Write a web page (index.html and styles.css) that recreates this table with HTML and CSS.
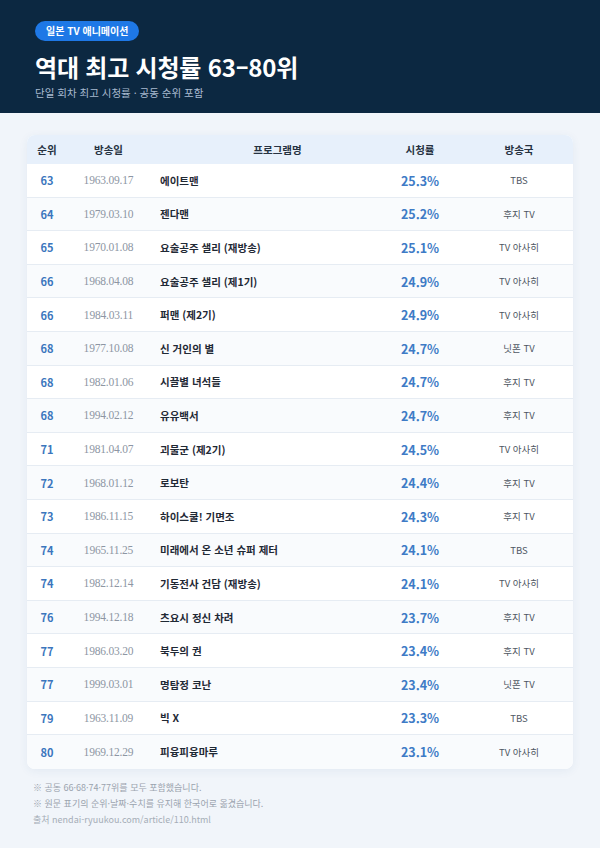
FILE: index.html
```html
<!DOCTYPE html>
<html lang="ko">
<head>
<meta charset="utf-8">
<link rel="stylesheet" href="styles.css">
</head>
<body>
<header class="hero">
  <span class="badge">일본 TV 애니메이션</span>
  <h1 class="title">역대 최고 시청률 63–80위</h1>
  <p class="subtitle">단일 회차 최고 시청률 · 공동 순위 포함</p>
</header>
<main class="content">
  <div class="card">
    <div class="row head">
      <div class="c-rank">순위</div>
      <div class="c-date">방송일</div>
      <div class="c-name">프로그램명</div>
      <div class="c-rate">시청률</div>
      <div class="c-net">방송국</div>
    </div>
    <div class="row"><div class="c-rank">63</div><div class="c-date">1963.09.17</div><div class="c-name">에이트맨</div><div class="c-rate">25.3%</div><div class="c-net">TBS</div></div>
    <div class="row alt"><div class="c-rank">64</div><div class="c-date">1979.03.10</div><div class="c-name">젠다맨</div><div class="c-rate">25.2%</div><div class="c-net">후지 TV</div></div>
    <div class="row"><div class="c-rank">65</div><div class="c-date">1970.01.08</div><div class="c-name">요술공주 샐리 (재방송)</div><div class="c-rate">25.1%</div><div class="c-net">TV 아사히</div></div>
    <div class="row alt"><div class="c-rank">66</div><div class="c-date">1968.04.08</div><div class="c-name">요술공주 샐리 (제1기)</div><div class="c-rate">24.9%</div><div class="c-net">TV 아사히</div></div>
    <div class="row"><div class="c-rank">66</div><div class="c-date">1984.03.11</div><div class="c-name">퍼맨 (제2기)</div><div class="c-rate">24.9%</div><div class="c-net">TV 아사히</div></div>
    <div class="row alt"><div class="c-rank">68</div><div class="c-date">1977.10.08</div><div class="c-name">신 거인의 별</div><div class="c-rate">24.7%</div><div class="c-net">닛폰 TV</div></div>
    <div class="row"><div class="c-rank">68</div><div class="c-date">1982.01.06</div><div class="c-name">시끌별 녀석들</div><div class="c-rate">24.7%</div><div class="c-net">후지 TV</div></div>
    <div class="row alt"><div class="c-rank">68</div><div class="c-date">1994.02.12</div><div class="c-name">유유백서</div><div class="c-rate">24.7%</div><div class="c-net">후지 TV</div></div>
    <div class="row"><div class="c-rank">71</div><div class="c-date">1981.04.07</div><div class="c-name">괴물군 (제2기)</div><div class="c-rate">24.5%</div><div class="c-net">TV 아사히</div></div>
    <div class="row alt"><div class="c-rank">72</div><div class="c-date">1968.01.12</div><div class="c-name">로보탄</div><div class="c-rate">24.4%</div><div class="c-net">후지 TV</div></div>
    <div class="row"><div class="c-rank">73</div><div class="c-date">1986.11.15</div><div class="c-name">하이스쿨! 기면조</div><div class="c-rate">24.3%</div><div class="c-net">후지 TV</div></div>
    <div class="row alt"><div class="c-rank">74</div><div class="c-date">1965.11.25</div><div class="c-name">미래에서 온 소년 슈퍼 제터</div><div class="c-rate">24.1%</div><div class="c-net">TBS</div></div>
    <div class="row"><div class="c-rank">74</div><div class="c-date">1982.12.14</div><div class="c-name">기동전사 건담 (재방송)</div><div class="c-rate">24.1%</div><div class="c-net">TV 아사히</div></div>
    <div class="row alt"><div class="c-rank">76</div><div class="c-date">1994.12.18</div><div class="c-name">츠요시 정신 차려</div><div class="c-rate">23.7%</div><div class="c-net">후지 TV</div></div>
    <div class="row"><div class="c-rank">77</div><div class="c-date">1986.03.20</div><div class="c-name">북두의 권</div><div class="c-rate">23.4%</div><div class="c-net">후지 TV</div></div>
    <div class="row alt"><div class="c-rank">77</div><div class="c-date">1999.03.01</div><div class="c-name">명탐정 코난</div><div class="c-rate">23.4%</div><div class="c-net">닛폰 TV</div></div>
    <div class="row"><div class="c-rank">79</div><div class="c-date">1963.11.09</div><div class="c-name">빅 X</div><div class="c-rate">23.3%</div><div class="c-net">TBS</div></div>
    <div class="row alt last"><div class="c-rank">80</div><div class="c-date">1969.12.29</div><div class="c-name">피융피융마루</div><div class="c-rate">23.1%</div><div class="c-net">TV 아사히</div></div>
  </div>
  <div class="notes">
    <p>※ 공동 66·68·74·77위를 모두 포함했습니다.</p>
    <p>※ 원문 표기의 순위·날짜·수치를 유지해 한국어로 옮겼습니다.</p>
    <p class="src">출처 nendai-ryuukou.com/article/110.html</p>
  </div>
</main>
</body>
</html>
```

FILE: styles.css
```css
* { box-sizing: border-box; }
html, body { margin: 0; padding: 0; }
body {
  width: 600px;
  height: 848px;
  background: #f1f5fa;
  font-family: "Noto Sans CJK KR", "Noto Sans", sans-serif;
  overflow: hidden;
}
.hero {
  background: #0c2841;
  height: 113px;
  padding: 21px 35px 0;
  display: flex;
  flex-direction: column;
  align-items: flex-start;
}
.badge {
  display: inline-block;
  background: #1e78e6;
  color: #fff;
  font-size: 10px;
  font-weight: 700;
  height: 20px;
  line-height: 20px;
  padding: 0 11px;
  border-radius: 10px;
}
.title {
  margin: 9px 0 0;
  color: #fff;
  font-size: 24px;
  font-weight: 700;
  line-height: 34px;
  letter-spacing: -0.2px;
}
.subtitle {
  margin: 1px 0 0;
  color: #a8bad0;
  font-size: 10.5px;
  line-height: 16px;
}
.content {
  padding: 22px 27px 0;
}
.card {
  background: #fff;
  border-radius: 8px;
  box-shadow: 0 2px 10px rgba(40, 80, 140, 0.07);
  overflow: hidden;
}
.row {
  display: grid;
  grid-template-columns: 40px 83px 235px 82px 1fr;
  align-items: center;
  height: 33.6px;
  border-bottom: 1px solid #e6ecf3;
  background: #fff;
}
.row.alt { background: #f9fbfd; }
.row.last { border-bottom: none; }
.row.head {
  height: 29px;
  background: #e7f0fb;
  border-bottom: none;
  font-size: 10.5px;
  font-weight: 700;
  color: #263241;
}
.c-rank { text-align: center; }
.c-date { text-align: center; }
.c-name { padding-left: 10px; }
.c-rate { text-align: center; padding-right: 12px; }
.c-net { text-align: center; padding-right: 2px; }
.head .c-name { text-align: center; padding-left: 20px; }
.row:not(.head) .c-rank {
  color: #3b76bd;
  font-size: 11px;
  font-weight: 700;
}
.row:not(.head) .c-date {
  color: #8d96a3;
  font-size: 11.5px;
  letter-spacing: -0.2px;
  font-family: "Liberation Serif", "Noto Sans CJK KR", serif;
}
.row:not(.head) .c-name {
  color: #1f2935;
  font-size: 10.5px;
  font-weight: 700;
}
.row:not(.head) .c-rate {
  color: #3e7bc6;
  font-size: 12.5px;
  font-weight: 700;
}
.row:not(.head) .c-net {
  color: #4f5763;
  font-size: 9.5px;
}
.notes {
  padding: 11px 6px 0;
  color: #9aa3ae;
  font-size: 9px;
}
.notes p {
  margin: 0;
  line-height: 16px;
}
.notes .src { color: #a5adb7; }
```
